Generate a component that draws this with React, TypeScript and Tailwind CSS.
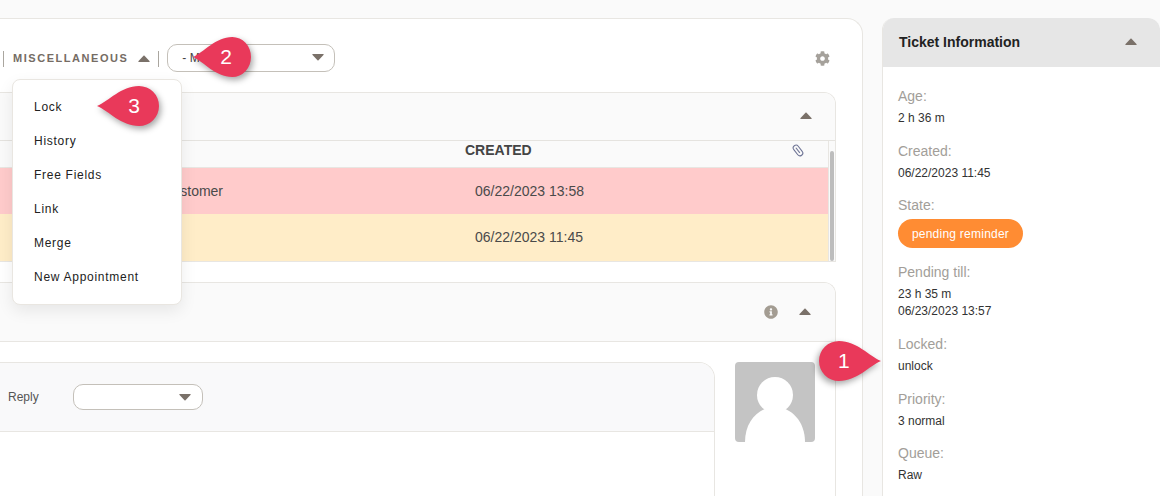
import { FaCog, FaInfoCircle } from "react-icons/fa";

const menuItems = ["Lock", "History", "Free Fields", "Link", "Merge", "New Appointment"];

function Caret({ down = false, className = "" }: { down?: boolean; className?: string }) {
  return (
    <svg width="12" height="7" viewBox="0 0 12 7" className={`${down ? "rotate-180" : ""} ${className}`}>
      <path d="M6 0.3 L11.7 6.2 Q12 7 11 7 L1 7 Q0 7 0.3 6.2 Z" fill="#7a7169" />
    </svg>
  );
}

function Clip({ className }: { className: string }) {
  return (
    <svg width="12" height="13" viewBox="0 0 12 13" fill="none" stroke="#6f7596" strokeWidth="1.1" className={className}>
      <g transform="rotate(-38 6 6.5)">
        <rect x="3.2" y="0.5" width="5.6" height="12" rx="2.8" />
        <path d="M6 3 V9.5" />
      </g>
    </svg>
  );
}

function Marker({ label, flip = false, className }: { label: string; flip?: boolean; className: string }) {
  return (
    <div className={`absolute z-20 h-10 ${className}`}>
      <svg
        viewBox="0 0 62 40"
        preserveAspectRatio="none"
        className={`h-full w-full overflow-visible drop-shadow-[2px_3px_3px_rgba(0,0,0,0.35)] ${flip ? "-scale-x-100" : ""}`}
      >
        <path d="M0 20 C12 15 24 0 42 0 A20 20 0 0 1 42 40 C24 40 12 25 0 20 Z" fill="#e9395a" />
      </svg>
      <span
        className={`absolute top-0 text-[21px] leading-10 text-white ${flip ? "left-[19px]" : "right-[19px]"}`}
      >
        {label}
      </span>
    </div>
  );
}

function Select({ text, className }: { text?: string; className: string }) {
  return (
    <div
      className={`flex items-center justify-between rounded-[10px] border border-[#c4c0b9] bg-white text-xs text-[#444] ${className}`}
    >
      <span>{text}</span>
      <Caret down />
    </div>
  );
}

function Field({ label, lines }: { label: string; lines: string[] }) {
  return (
    <div className="mb-[13.7px]">
      <div className="text-sm leading-5 text-[#a29e99]">{label}</div>
      <div className="mt-[4px] text-xs leading-[17px] text-[#333]">
        {lines.map((line) => (
          <div key={line}>{line}</div>
        ))}
      </div>
    </div>
  );
}

export default function App() {
  return (
    <div className="relative flex h-[496px] w-[1160px] overflow-hidden bg-[#fafafa] pt-[18px] [font-family:'Liberation_Sans',sans-serif]">
      <main className="h-[600px] w-[863px] shrink-0 rounded-tr-2xl border-t border-r border-[#e8e6e2] bg-white pr-[26px]">
        <div className="flex h-[73px] items-center pt-[6px]">
          <div className="ml-[3px] h-4 w-px bg-[#aaa69f]" />
          <span className="ml-[9px] text-[11px] font-bold tracking-[0.14em] text-[#756c64]">MISCELLANEOUS</span>
          <Caret className="ml-[10px]" />
          <div className="ml-[8px] h-4 w-px bg-[#aaa69f]" />
          <Select text="- Move" className="-mt-[2px] ml-2 h-7 w-[168px] pr-[10px] pl-[14px]" />
          <FaCog className="mr-[6px] ml-auto text-[15px] text-[#a5a19b]" />
        </div>

        <section className="overflow-hidden rounded-tr-xl border-t border-r border-b border-[#e8e6e2]">
          <div className="flex h-12 items-center justify-end border-b border-[#e5e3df] bg-[#fafafa] pr-[23px] pb-[2px]">
            <Caret />
          </div>
          <div className="flex">
            <div className="flex-1">
              <div className="grid h-[27px] grid-cols-[465px_1fr_auto] items-center border-b border-[#e8e6e2] bg-[#fafafa] pr-[24px] text-sm font-bold text-[#444]">
                <span />
                <span className="-mt-[8px]">CREATED</span>
                <Clip className="-mt-[7px]" />
              </div>
              <div className="grid h-[46px] grid-cols-[475px_1fr] items-center bg-[#ffcbcb] text-sm text-[#4a4a4a]">
                <span className="pl-[111px]">Email to customer</span>
                <span>06/22/2023 13:58</span>
              </div>
              <div className="grid h-[47px] grid-cols-[475px_1fr] items-center bg-[#ffedc8] pb-[1px] text-sm text-[#4a4a4a]">
                <span />
                <span>06/22/2023 11:45</span>
              </div>
            </div>
            <div className="w-[7px] border-l border-[#e8e6e2] bg-[#fafafa] pt-[10px] pl-[1px]">
              <div className="h-[110px] w-[4px] rounded-sm bg-[#bdbdbd]" />
            </div>
          </div>
        </section>

        <section className="mt-5 h-[400px] overflow-hidden rounded-tr-xl border-t border-r border-[#e8e6e2]">
          <div className="flex h-[59px] items-center justify-end gap-[21px] border-b border-[#e8e6e2] bg-[#fafafa] pr-[24px] pb-[1px]">
            <FaInfoCircle className="text-sm text-[#a39c92]" />
            <Caret />
          </div>
          <div className="flex pt-5 pr-5">
            <div className="h-[300px] w-[715px] overflow-hidden rounded-tr-2xl border-t border-r border-[#e8e6e2]">
              <div className="flex h-[69px] items-center border-b border-[#e8e6e2] bg-[#f9f9fa] pl-2 text-xs text-[#555]">
                <span className="w-[65px]">Reply</span>
                <Select className="h-[26px] w-[130px] pr-[11px]" />
              </div>
            </div>
            <div className="ml-5 flex h-20 w-20 items-end justify-center overflow-hidden rounded-sm bg-[#c4c4c4]">
              <svg width="60" height="66" viewBox="0 0 60 66">
                <circle cx="30" cy="19" r="18" fill="#fff" />
                <path d="M0 66 C0 45 14 31 30 31 C46 31 60 45 60 66 Z" fill="#fff" />
              </svg>
            </div>
          </div>
        </section>
      </main>

      <aside className="ml-[19px] flex-1 overflow-hidden rounded-t-xl border-l border-[#e8e6e2] bg-white">
        <div className="flex h-[49px] items-center justify-between bg-[#e6e6e6] pr-[23px] pb-[2px] pl-4 text-sm font-bold text-[#222]">
          <span>Ticket Information</span>
          <Caret />
        </div>
        <div className="px-[15px] pt-[19px]">
          <Field label="Age:" lines={["2 h 36 m"]} />
          <Field label="Created:" lines={["06/22/2023 11:45"]} />
          <div className="mb-[14px]">
            <div className="text-sm leading-5 text-[#a29e99]">State:</div>
            <div className="mt-[4px] flex h-[29px] w-[125px] items-center justify-center rounded-full bg-[#ff8c33] text-xs tracking-[0.02em] text-white">
              pending reminder
            </div>
          </div>
          <Field label="Pending till:" lines={["23 h 35 m", "06/23/2023 13:57"]} />
          <Field label="Locked:" lines={["unlock"]} />
          <Field label="Priority:" lines={["3 normal"]} />
          <Field label="Queue:" lines={["Raw"]} />
        </div>
      </aside>

      <div className="absolute top-[79px] left-[12px] z-10 w-[170px] rounded-lg border border-[#e9e6e1] bg-white py-[10px] shadow-[0_6px_16px_rgba(0,0,0,0.08)]">
        {menuItems.map((item) => (
          <div key={item} className="flex h-[34px] items-center pl-[21px] text-xs tracking-[0.06em] text-[#222]">
            {item}
          </div>
        ))}
      </div>

      <Marker label="1" flip className="top-[341px] left-[819px] w-[62px]" />
      <Marker label="2" className="top-[37px] left-[193px] w-[58px]" />
      <Marker label="3" className="top-[86px] left-[97px] w-[62px]" />
    </div>
  );
}
